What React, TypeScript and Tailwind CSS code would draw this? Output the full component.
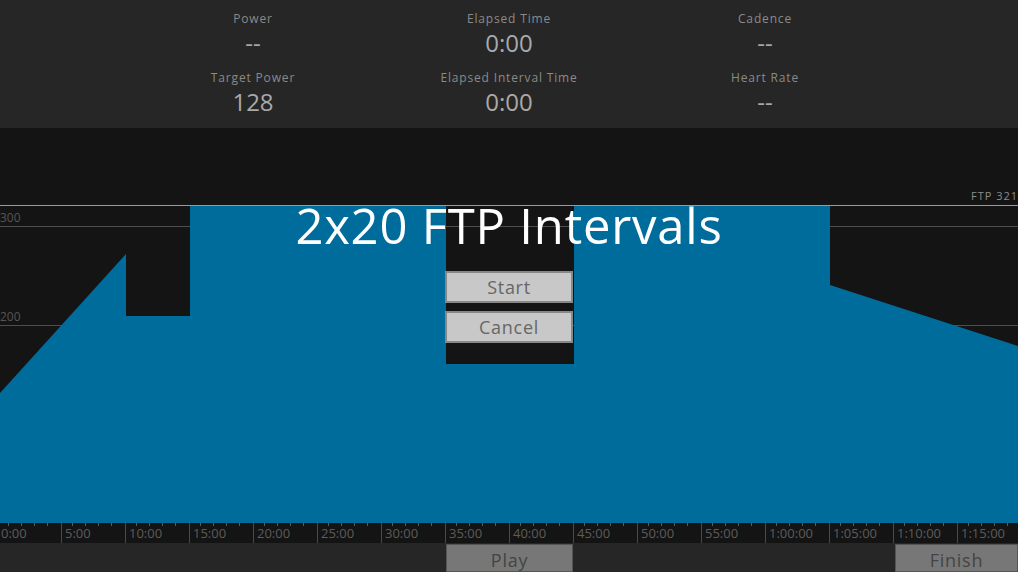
import React from 'react';

const stats = [
  { label: 'Power', value: '--' },
  { label: 'Elapsed Time', value: '0:00' },
  { label: 'Cadence', value: '--' },
  { label: 'Target Power', value: '128' },
  { label: 'Elapsed Interval Time', value: '0:00' },
  { label: 'Heart Rate', value: '--' },
];

// workout profile in chart coords (0..1018 x 0..318)
const profile = [
  [0, 318], [0, 188], [126, 49], [126, 111], [190, 111], [190, 1],
  [446, 1], [446, 159], [574, 159], [574, 1], [830, 1], [830, 80],
  [1018, 141], [1018, 318],
];

function fmt(min: number) {
  if (min < 60) return `${min}:00`;
  const h = Math.floor(min / 60);
  const m = min % 60;
  return `${h}:${m.toString().padStart(2, '0')}:00`;
}

function Timeline() {
  const majors = Array.from({ length: 16 }, (_, i) => i);
  return (
    <svg width={1018} height={20} className="block">
      {majors.map((k) => {
        const x = k === 0 ? -2.5 : 64 * k - 2.5;
        return (
          <g key={k}>
            {k > 0 && <line x1={x} x2={x} y1={0} y2={20} stroke="#4a4a4a" strokeWidth={1} />}
            {[0, 1, 2, 3].map((j) => {
              const mx = Math.round(x + 10 + j * 13.2) + 0.5;
              return <line key={j} x1={mx} x2={mx} y1={0} y2={3} stroke="#5a5a5a" strokeWidth={1} />;
            })}
            <text x={k === 0 ? 1 : x + 3.5} y={15} fontSize={13} fill="#5c5c5c" fontFamily="'Open Sans', sans-serif">
              {fmt(k * 5)}
            </text>
          </g>
        );
      })}
    </svg>
  );
}

export default function App() {
  return (
    <div className="w-[1018px] h-[572px] bg-[#141414] flex flex-col overflow-hidden font-['Open_Sans',sans-serif]">
      {/* stats header */}
      <header className="h-[128px] bg-[#262626] flex justify-center">
        <div className="w-[768px] grid grid-cols-3 grid-rows-2 pt-[10px]">
          {stats.map((s) => (
            <div key={s.label} className="flex flex-col items-center h-[60px]">
              <div className="text-[12px] leading-[17px] tracking-[0.07em] text-[#8a8a8a]">{s.label}</div>
              <div className="text-[24px] leading-[31px] text-[#a9a9a9]">{s.value}</div>
            </div>
          ))}
        </div>
      </header>

      <div className="h-[78px] flex items-end justify-end pb-[1px]">
        <span className="text-[11px] tracking-[0.09em] text-[#8c8c8c]">FTP 321</span>
      </div>

      {/* chart */}
      <div className="relative h-[318px]">
        <svg width={1018} height={318} className="block">
          <line x1={0} x2={1018} y1={0.5} y2={0.5} stroke="#9a9a9a" strokeWidth={1} />
          <line x1={0} x2={1018} y1={21.5} y2={21.5} stroke="#4e4e4e" strokeWidth={1} />
          <line x1={0} x2={1018} y1={120.5} y2={120.5} stroke="#4e4e4e" strokeWidth={1} />
          <text x={0} y={17} fontSize={12} fill="#555" fontFamily="'Open Sans', sans-serif">300</text>
          <text x={0} y={116} fontSize={12} fill="#555" fontFamily="'Open Sans', sans-serif">200</text>
          <polygon points={profile.map((p) => p.join(',')).join(' ')} fill="#006c9c" />
        </svg>

        <div className="absolute inset-x-0 top-0 flex flex-col items-center">
          <h1 className="text-[49px] leading-[44px] text-white -mt-[2px] tracking-[0.016em]">2x20 FTP Intervals</h1>
          <div className="w-[128px] flex flex-col gap-[8px] mt-[24px]">
            <button className="h-[32px] bg-[#c8c8c8] border-2 border-[#888] text-[#666] text-[18px] leading-none tracking-[0.04em]">Start</button>
            <button className="h-[32px] bg-[#c8c8c8] border-2 border-[#888] text-[#666] text-[18px] leading-none tracking-[0.04em]">Cancel</button>
          </div>
        </div>
      </div>

      <Timeline />

      {/* controls */}
      <div className="flex-1 bg-[#262626] flex items-start">
        <div className="w-[446px]" />
        <button className="w-[127px] h-[28px] mt-[1px] bg-[#777] border border-[#555] text-[#444] text-[18px] leading-none pt-[4px] tracking-[0.04em]">Play</button>
        <div className="flex-1" />
        <button className="w-[123px] h-[28px] mt-[1px] bg-[#777] border border-[#555] text-[#444] text-[18px] leading-none pt-[4px] tracking-[0.04em]">Finish</button>
      </div>
    </div>
  );
}
